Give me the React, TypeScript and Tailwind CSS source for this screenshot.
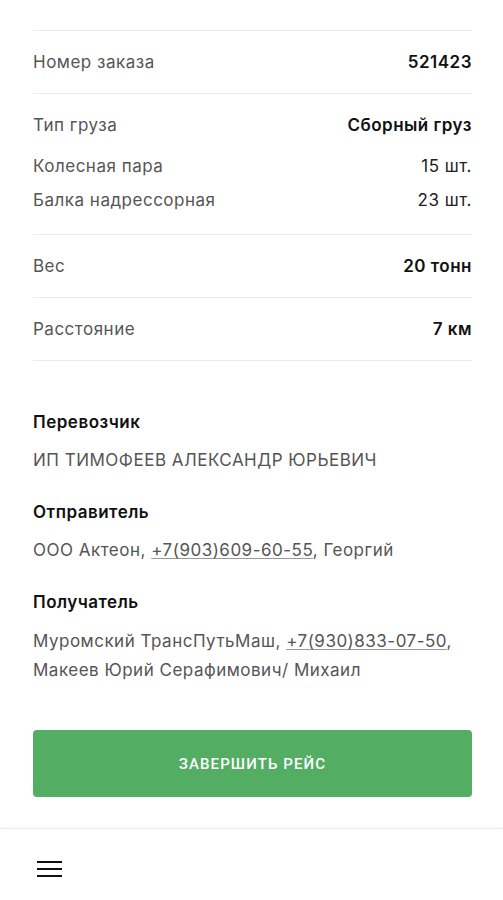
import React from 'react';

function Row({ label, value }: { label: string; value: string }) {
  return (
    <div className="flex justify-between items-center py-[19px] border-b border-[#ebebeb]">
      <span className="text-[#555]">{label}</span>
      <span className="font-semibold text-[#111]">{value}</span>
    </div>
  );
}

export default function App() {
  const items = [
    { name: 'Колесная пара', qty: '15 шт.' },
    { name: 'Балка надрессорная', qty: '23 шт.' },
  ];

  return (
    <div className="w-[503px] h-[900px] bg-white flex flex-col font-['Inter',sans-serif] text-[17px] leading-[24px] tracking-[0.5px]">
      <div className="flex-1 pl-[33px] pr-[31px] pt-[30px]">
        <div className="border-t border-[#ebebeb]">
          <Row label="Номер заказа" value="521423" />

          <div className="pt-[19px] pb-[22px] border-b border-[#ebebeb]">
            <div className="flex justify-between items-center">
              <span className="text-[#555]">Тип груза</span>
              <span className="font-semibold text-[#111]">Сборный груз</span>
            </div>
            <div className="mt-[17px] flex flex-col gap-[10px]">
              {items.map((it) => (
                <div key={it.name} className="flex justify-between items-center">
                  <span className="text-[#555]">{it.name}</span>
                  <span className="text-[#222]">{it.qty}</span>
                </div>
              ))}
            </div>
          </div>

          <Row label="Вес" value="20 тонн" />
          <Row label="Расстояние" value="7 км" />
        </div>

        <div className="mt-[49px] flex flex-col">
          <h4 className="font-semibold text-[#111]">Перевозчик</h4>
          <p className="mt-[14px] text-[#555]">ИП ТИМОФЕЕВ АЛЕКСАНДР ЮРЬЕВИЧ</p>

          <h4 className="mt-[28px] font-semibold text-[#111]">Отправитель</h4>
          <p className="mt-[14px] text-[#555]">
            ООО Актеон, <span className="underline decoration-[#999] underline-offset-2">+7(903)609-60-55</span>, Георгий
          </p>

          <h4 className="mt-[28px] font-semibold text-[#111]">Получатель</h4>
          <p className="mt-[13px] text-[#555] leading-[29px]">
            Муромский ТрансПутьМаш, <span className="underline decoration-[#999] underline-offset-2">+7(930)833-07-50</span>,
            <br />
            Макеев Юрий Серафимович/ Михаил
          </p>
        </div>

        <button className="mt-[45px] w-full h-[67px] rounded-[4px] bg-[#53ad63] text-white text-[15px] font-medium uppercase font-['Roboto',sans-serif] tracking-[1.1px]">
          Завершить рейс
        </button>
      </div>

      <div className="h-[72px] border-t border-[#ececec] shadow-[0_-1px_3px_rgba(0,0,0,0.04)] flex items-center pl-[37px] pt-[8px]">
        <svg width="25" height="18" viewBox="0 0 25 18" fill="none">
          <rect x="0" y="1" width="25" height="2" fill="#111" />
          <rect x="0" y="8" width="25" height="2" fill="#111" />
          <rect x="0" y="15" width="25" height="2" fill="#111" />
        </svg>
      </div>
    </div>
  );
}
